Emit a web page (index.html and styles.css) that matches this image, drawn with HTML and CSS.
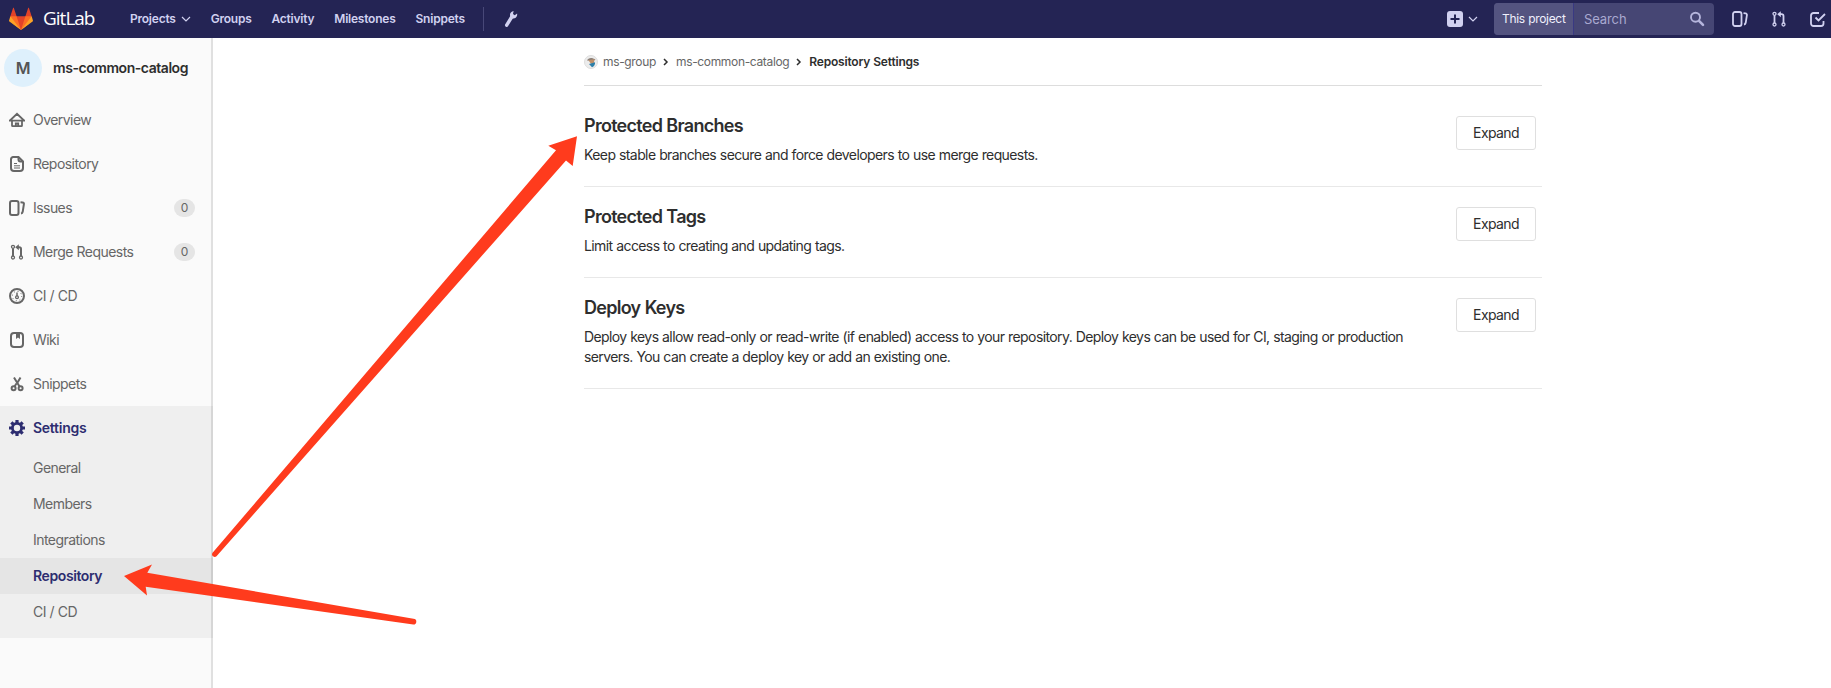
FILE: index.html
```html
<!DOCTYPE html>
<html lang="en">
<head>
<meta charset="utf-8">
<title>Repository Settings</title>
<link rel="stylesheet" href="styles.css">
</head>
<body>
<header class="navbar">
  <a class="brand">
    <svg class="logo" viewBox="0 0 36 36"><path fill="#e24329" d="M2 14l9.38 9v-9l-4-12.28c-.205-.632-1.176-.632-1.38 0z"/><path fill="#e24329" d="M34 14l-9.38 9v-9l4-12.28c.205-.632 1.176-.632 1.38 0z"/><path fill="#e24329" d="M18 34.38 3 14h30z"/><path fill="#fc6d26" d="M18 34.38 11.38 14H2l4 11z"/><path fill="#fc6d26" d="M18 34.38 24.62 14H34l-4 11z"/><path fill="#fca326" d="M2 14L.1 20.16c-.18.565 0 1.2.5 1.56L18 34.38z"/><path fill="#fca326" d="M34 14l1.9 6.16c.18.565 0 1.2-.5 1.56L18 34.38z"/></svg>
    <span class="wordmark">GitLab</span>
  </a>
  <nav class="main-nav">
    <a class="nav-projects">Projects<svg class="chev" viewBox="0 0 10 6"><path d="M1 1l4 4 4-4"/></svg></a>
    <a>Groups</a><a>Activity</a><a>Milestones</a><a>Snippets</a>
  </nav>
  <span class="divider"></span>
  <svg class="wrench" viewBox="0 0 14 18"><path d="M2.700 15.200 8 6.500" fill="none" stroke="#d1d1f0" stroke-width="3.400" stroke-linecap="round"/><path fill="#d1d1f0" d="M9.600.9 9 3.900l1.700 1.300 2.400-1.600c.5 2.400-.9 4.800-3.400 5-2.300.1-4-1.700-3.700-4C6.200 2.700 7.600 1.200 9.600.9z"/></svg>
  <div class="nav-right">
    <svg class="plus" viewBox="0 0 16 16"><rect width="16" height="16" rx="3" fill="#d1d1f0"/><path d="M8 3.500v9M3.500 8h9" stroke="#242454" stroke-width="2"/></svg>
    <svg class="chev" viewBox="0 0 10 6"><path d="M1 1l4 4 4-4"/></svg>
    <div class="search"><span class="scope">This project</span><span class="field">Search<svg viewBox="0 0 16 16"><circle cx="6.500" cy="6.200" r="4.500" stroke-width="1.900"/><path d="M10 9.800l4 4" stroke-width="2.600" stroke-linecap="round"/></svg></span></div>
    <svg class="icon light nav-icon" viewBox="0 0 16 16"><rect x="1" y="1" width="8.500" height="14" rx="2"/><path d="M11.500 2.200l2 .2c1 .2 1.600.8 1.400 1.700l-1.200 7.700c-.2 1-.8 1.600-1.700 1.700"/></svg>
    <svg class="icon light nav-icon" viewBox="0 0 16 16"><g stroke-width="1.300"><circle cx="3.500" cy="2.800" r="1.500"/><circle cx="3.500" cy="13.500" r="1.500"/><circle cx="12.500" cy="13.500" r="1.500"/></g><path d="M3.500 4.500v7.500M8.500 3.200h2c1.300 0 2 .7 2 1.800v7"/><path d="M9.800.2v6L6.200 3.200z" class="solid"/></svg>
    <svg class="icon light" viewBox="0 0 16 16"><path d="M9 2H3.500A2.500 2.500 0 0 0 1 4.500v8A2.500 2.500 0 0 0 3.500 15H11a2.500 2.500 0 0 0 2.500-2.500V10M5.500 6.500l3 3L15 3"/></svg>
  </div>
</header>
<div class="page">
  <aside class="sidebar">
    <div class="project"><span class="avatar">M</span><span class="project-name">ms-common-catalog</span></div>
    <a class="item"><svg class="icon" viewBox="0 0 16 16"><path stroke-width="1.800" d="M1 8.500 8 1.800l7 6.700M3 8v5.500c0 .4.200.6.600.6h8.800c.4 0 .6-.2.600-.6V8M0 8.600h16M6.800 14v-2.500h2.400V14"/></svg>Overview</a>
    <a class="item"><svg class="icon" viewBox="0 0 16 16"><path d="M4 1h5.500L14 5.500V12a3 3 0 0 1-3 3H5a3 3 0 0 1-3-3V3.500A2.500 2.500 0 0 1 4 1z"/><path d="M9.500 1v2.500a2 2 0 0 0 2 2H14"/><path d="M5 7.500h3M5 9.800h6M5 12h6" stroke-width="1"/></svg>Repository</a>
    <a class="item"><svg class="icon" viewBox="0 0 16 16"><rect x="1" y="1" width="8.500" height="14" rx="2"/><path d="M11.500 2.200l2 .2c1 .2 1.600.8 1.400 1.700l-1.200 7.700c-.2 1-.8 1.600-1.700 1.700"/></svg>Issues<b class="badge">0</b></a>
    <a class="item"><svg class="icon" viewBox="0 0 16 16"><g stroke-width="1.300"><circle cx="4" cy="2.800" r="1.500"/><circle cx="4" cy="13.500" r="1.500"/><circle cx="12" cy="13.500" r="1.500"/></g><path d="M4 4.500v7.500M8.500 3.200h1.700c1.200 0 1.800.7 1.800 1.800v7"/><path d="M9.800.2v6L6.200 3.200z" class="solid"/></svg>Merge Requests<b class="badge">0</b></a>
    <a class="item"><svg class="icon" viewBox="0 0 16 16"><circle cx="8" cy="8" r="7"/><circle cx="8" cy="9.300" r="1.400" stroke-width="1.300"/><path d="M8 8V4.500" stroke-width="1.500"/><circle cx="8" cy="8" r="4.700" stroke-width="1" stroke-dasharray="1 2.690"/></svg>CI / CD</a>
    <a class="item"><svg class="icon" viewBox="0 0 16 16"><rect x="2" y="1" width="12" height="14" rx="3"/><path class="solid" d="M7 1h4v6L9 5.500 7 7z"/></svg>Wiki</a>
    <a class="item"><svg class="icon" viewBox="0 0 16 16"><circle cx="4.600" cy="12.200" r="2"/><circle cx="11.600" cy="12.200" r="2"/><path d="M5 1.500l5.500 9M11.500 1.500 8.700 6.300M5.500 10.500l2-3"/></svg>Snippets</a>
    <div class="active-group">
      <a class="item current"><svg class="icon" viewBox="0 0 16 16"><circle cx="8" cy="8" r="4.600" stroke-width="2.800"/><path stroke-width="3.200" d="M8 0v3M8 13v3M0 8h3M13 8h3M2.350 2.350l2 2M11.650 11.650l2 2M2.350 13.650l2-2M11.650 4.350l2-2"/></svg>Settings</a>
      <a class="sub">General</a><a class="sub">Members</a><a class="sub">Integrations</a><a class="sub selected">Repository</a><a class="sub">CI / CD</a>
    </div>
  </aside>
  <main class="content">
    <div class="crumbs">
      <svg class="group-avatar" viewBox="0 0 14 14"><circle cx="7" cy="7" r="6.500" fill="#ececec" stroke="#ddd"/><path d="M3 5.500C4 2.500 8 2 11.500 4.500L9.500 6z" fill="#8c8078"/><path d="M4.500 5.300l6-1-.8 5-3-.8z" fill="#bf8f68"/><path d="M5 9l6-1.800c.5 2-1 4.500-3 5z" fill="#2d7fa8"/></svg>
      <span>ms-group</span><svg class="sep" viewBox="0 0 6 8"><path d="M1 1l3 3-3 3"/></svg><span>ms-common-catalog</span><svg class="sep" viewBox="0 0 6 8"><path d="M1 1l3 3-3 3"/></svg><span class="here">Repository Settings</span>
    </div>
    <section><div><h4>Protected Branches</h4><p>Keep stable branches secure and force developers to use merge requests.</p></div><button>Expand</button></section>
    <section><div><h4>Protected Tags</h4><p>Limit access to creating and updating tags.</p></div><button>Expand</button></section>
    <section><div><h4>Deploy Keys</h4><p>Deploy keys allow read-only or read-write (if enabled) access to your repository. Deploy keys can be used for CI, staging or production<br>servers. You can create a deploy key or add an existing one.</p></div><button>Expand</button></section>
  </main>
</div>
<svg class="arrows" viewBox="0 0 1831 688">
  <path d="M577 136.300 548.300 145.700 556 150.300 212.600 552.800A2.600 2.600 0 0 0 216.500 556.200L566 160.500 572.700 166z"/>
  <path d="M124 576 152 564.400 147.300 572.800 413.500 618.800A2.900 2.900 0 0 1 413.300 624.600L145.700 586.700 147 595.600z"/>
</svg>
</body>
</html>
```
FILE: styles.css
```css
* { box-sizing: border-box; }
body { margin: 0; height: 688px; overflow: hidden; background: #fff; color: #2e2e2e; font: 14px/20px Inter, "Liberation Sans", sans-serif; letter-spacing: -.6px; word-spacing: .35px; position: relative; }
svg { display: block; flex: none; }
.navbar { display: flex; align-items: center; height: 38px; padding: 0 0 1px 9px; background: #242454; color: #d1d1f0; }
.brand { display: flex; align-items: center; width: 111px; height: 36px; }
.logo { width: 24px; height: 24px; margin-right: 10px; }
.wordmark { font: 400 19px/36px "Open Sans", sans-serif; letter-spacing: -1px; color: #fff; padding-bottom: 1px; }
.main-nav { display: flex; font-size: 12px; font-weight: 600; letter-spacing: -.23px; }
.main-nav a { display: flex; align-items: center; padding: 0 10px; }
.chev { width: 10px; height: 6px; fill: none; stroke: #d1d1f0; stroke-width: 1.2; }
.nav-projects .chev { margin-left: 5px; }
.divider { width: 1px; height: 24px; background: #484878; margin-left: 8px; }
.wrench { width: 14px; height: 18px; margin-left: 20px; }
.nav-right { display: flex; align-items: center; margin-left: auto; padding-right: 5px; }
.plus { width: 16px; height: 16px; margin-right: 5px; }
.search { display: flex; width: 220px; height: 32px; margin: 0 18px 0 16px; border-radius: 4px; overflow: hidden; background: #464674; }
.scope { width: 80px; padding-left: 8px; background: #545480; color: #f0f0fc; font-size: 12px; line-height: 32px; letter-spacing: -.32px; border-right: 1px solid #393982; white-space: nowrap; }
.field { display: flex; flex: 1; align-items: center; justify-content: space-between; padding: 0 9px 0 10px; color: #a9a9d0; font-size: 13px; letter-spacing: -.1px; }
.field svg { width: 16px; height: 16px; fill: none; stroke: #b5b5dc; }
.icon { width: 16px; height: 16px; fill: none; stroke: #666; stroke-width: 2; }
.icon .solid { fill: #666; stroke: none; }
.light { stroke: #d1d1f0; stroke-width: 1.8; }
.light .solid { fill: #d1d1f0; }
.nav-icon { margin-right: 23px; }
.page { display: flex; height: 650px; }
.sidebar { width: 213px; background: #fafafa; color: #666; letter-spacing: -.55px; box-shadow: inset -2px 0 0 #e0e0e0; }
.project { display: flex; align-items: center; height: 60px; padding-left: 4px; color: #2e2e2e; font-weight: 600; letter-spacing: -.45px; }
.avatar { width: 38px; height: 38px; margin-right: 11px; border-radius: 50%; background: #def0fc; color: #555; font-size: 16px; line-height: 38px; text-align: center; }
.item { display: flex; align-items: center; height: 44px; padding: 0 18px 0 9px; }
.item .icon { margin-right: 8px; }
.badge { margin-left: auto; width: 21px; height: 18px; border-radius: 9px; background: #e5e5e5; font: 400 12px/18px Inter, sans-serif; letter-spacing: 0; text-align: center; }
.active-group { padding-bottom: 8px; background: rgba(0, 0, 0, .045); }
.current, .selected { color: #2d2d70; font-weight: 600; letter-spacing: -.4px; }
.current { letter-spacing: -.27px; }
.current .icon { stroke: #2d2d70; }
.sub { display: flex; align-items: center; height: 36px; padding-left: 33px; }
.selected { background: rgba(0, 0, 0, .04); }
.content { width: 958px; margin-left: 371px; }
.crumbs { display: flex; align-items: center; height: 48px; border-bottom: 1px solid #ddd; color: #666; font-size: 12px; letter-spacing: -.34px; }
.group-avatar { width: 14px; height: 14px; margin-right: 5px; }
.sep { width: 6px; height: 8px; margin: 0 7px; fill: none; stroke: #2e2e2e; stroke-width: 1.5; }
.here { color: #2e2e2e; font-weight: 600; letter-spacing: -.2px; }
section { display: flex; justify-content: space-between; padding: 20px 6px 21px 0; border-bottom: 1px solid #e8e8e8; }
.crumbs + section { padding-top: 30px; }
h4 { margin: 0 0 9px; font-size: 18px; line-height: 20px; font-weight: 600; letter-spacing: -.72px; }
p { margin: 0; white-space: nowrap; }
button { flex: none; width: 80px; height: 34px; padding: 0; border: 1px solid #dfdfdf; border-radius: 3px; background: #fff; color: #2e2e2e; font: inherit; letter-spacing: inherit; }
.arrows { position: absolute; left: 0; top: 0; width: 1831px; height: 688px; fill: #ff3b1d; pointer-events: none; }
```
